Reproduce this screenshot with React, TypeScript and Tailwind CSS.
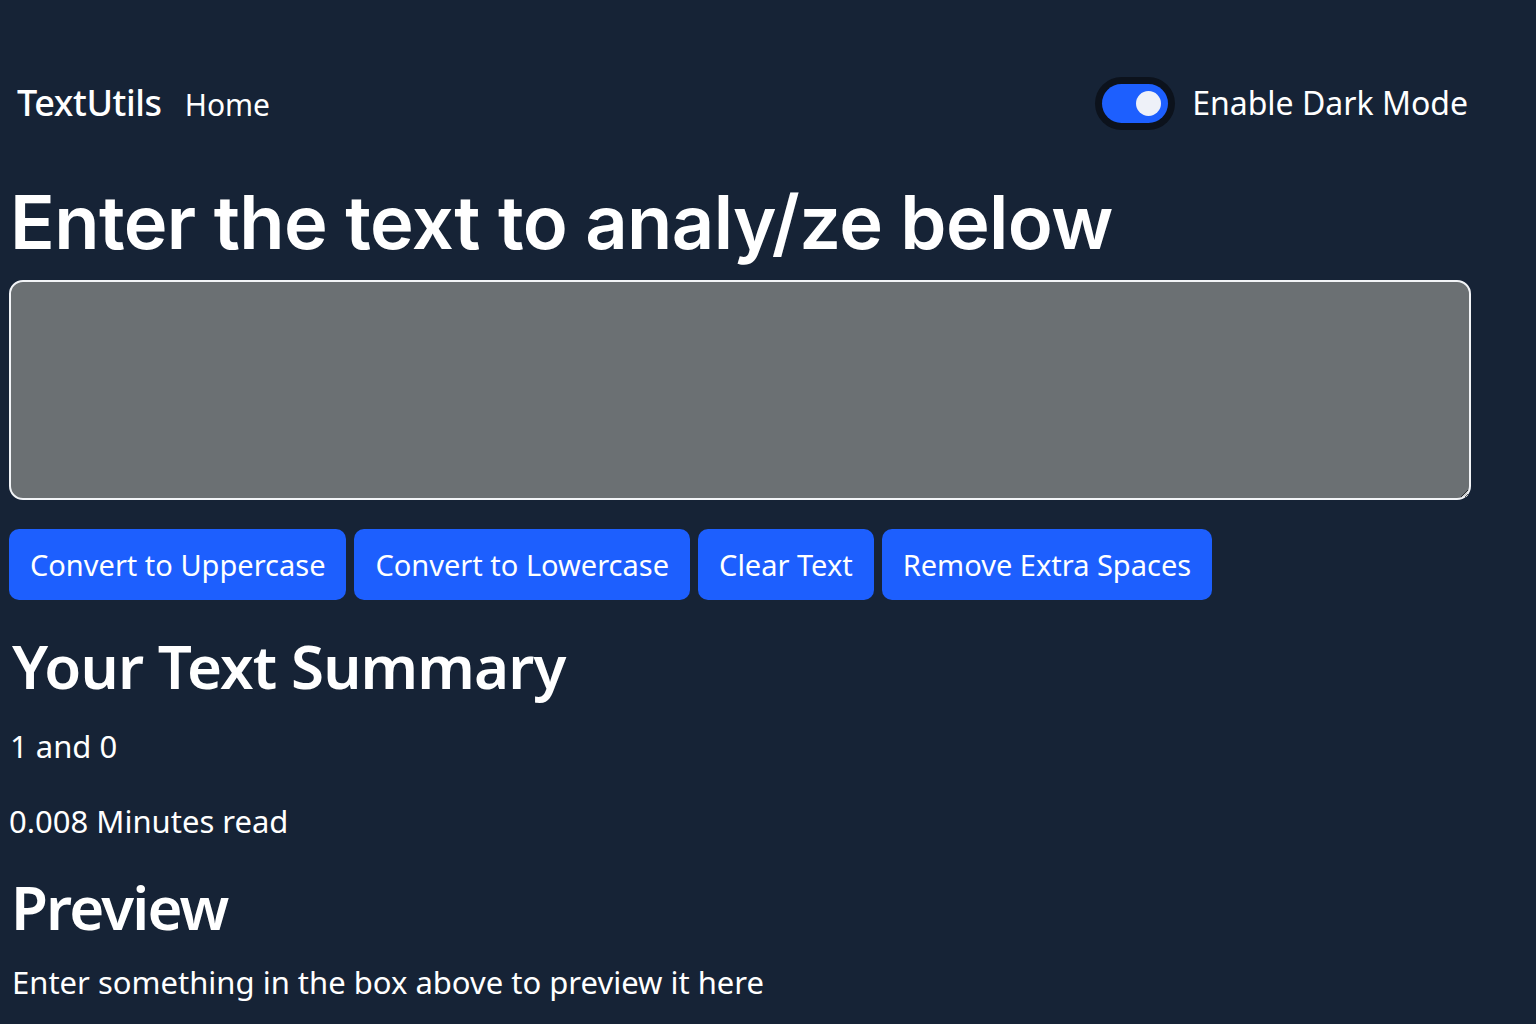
import React from "react";

const sans = { fontFamily: '"Noto Sans", "Open Sans", sans-serif' };

export default function App() {
  return (
    <div className="min-h-[1024px] w-full bg-[#162336] text-white overflow-hidden" style={sans}>
      <nav className="mt-[76px] h-[54px] pl-[17px] pr-[68px] flex items-center justify-between">
        <div className="flex items-baseline gap-[23px]">
          <span className="text-[36px] leading-none font-medium tracking-[-0.4px]">TextUtils</span>
          <span className="text-[30px] leading-none">Home</span>
        </div>
        <div className="flex items-center gap-[17px]">
          <div className="w-[80px] h-[53px] rounded-full bg-[#0c121c] flex items-center justify-center">
            <div className="w-[66px] h-[39px] rounded-full bg-[#1d5ffe] flex items-center justify-end pr-[7px]">
              <div className="w-[25px] h-[25px] rounded-full bg-[#eef1f8]" />
            </div>
          </div>
          <span className="text-[32px] leading-none">Enable Dark Mode</span>
        </div>
      </nav>

      <div className="pl-[9px] pr-[65px]">
        <h1
          className="mt-[55px] pl-[1px] text-[74px] leading-none font-semibold tracking-[-0.6px]"
          style={{ fontFamily: 'Inter, "Noto Sans", sans-serif' }}
        >
          Enter the text to analy/ze below
        </h1>
        <textarea
          className="mt-[21px] block w-full h-[220px] rounded-[14px] border-2 border-[#f2f4f7] bg-[#6b7073] outline-none"
          defaultValue=""
        />
        <div className="mt-[29px] flex gap-[8px]">
          {["Convert to Uppercase", "Convert to Lowercase", "Clear Text", "Remove Extra Spaces"].map((t) => (
            <button
              key={t}
              className="h-[71px] px-[21px] rounded-[10px] bg-[#1d5ffe] text-white text-[29px] leading-none"
            >
              {t}
            </button>
          ))}
        </div>

        <h2 className="mt-[36px] pl-[3px] text-[60px] leading-none font-semibold tracking-[-0.85px]">Your Text Summary</h2>
        <p className="mt-[35px] pl-[1px] text-[31px] leading-none">1 and 0</p>
        <p className="mt-[44px] text-[31px] leading-none">0.008 Minutes read</p>
        <h2 className="mt-[40px] pl-[2px] text-[60px] leading-none font-semibold tracking-[-1.8px]">Preview</h2>
        <p className="mt-[30px] pl-[3px] text-[31px] leading-none">Enter something in the box above to preview it here</p>
      </div>
    </div>
  );
}
